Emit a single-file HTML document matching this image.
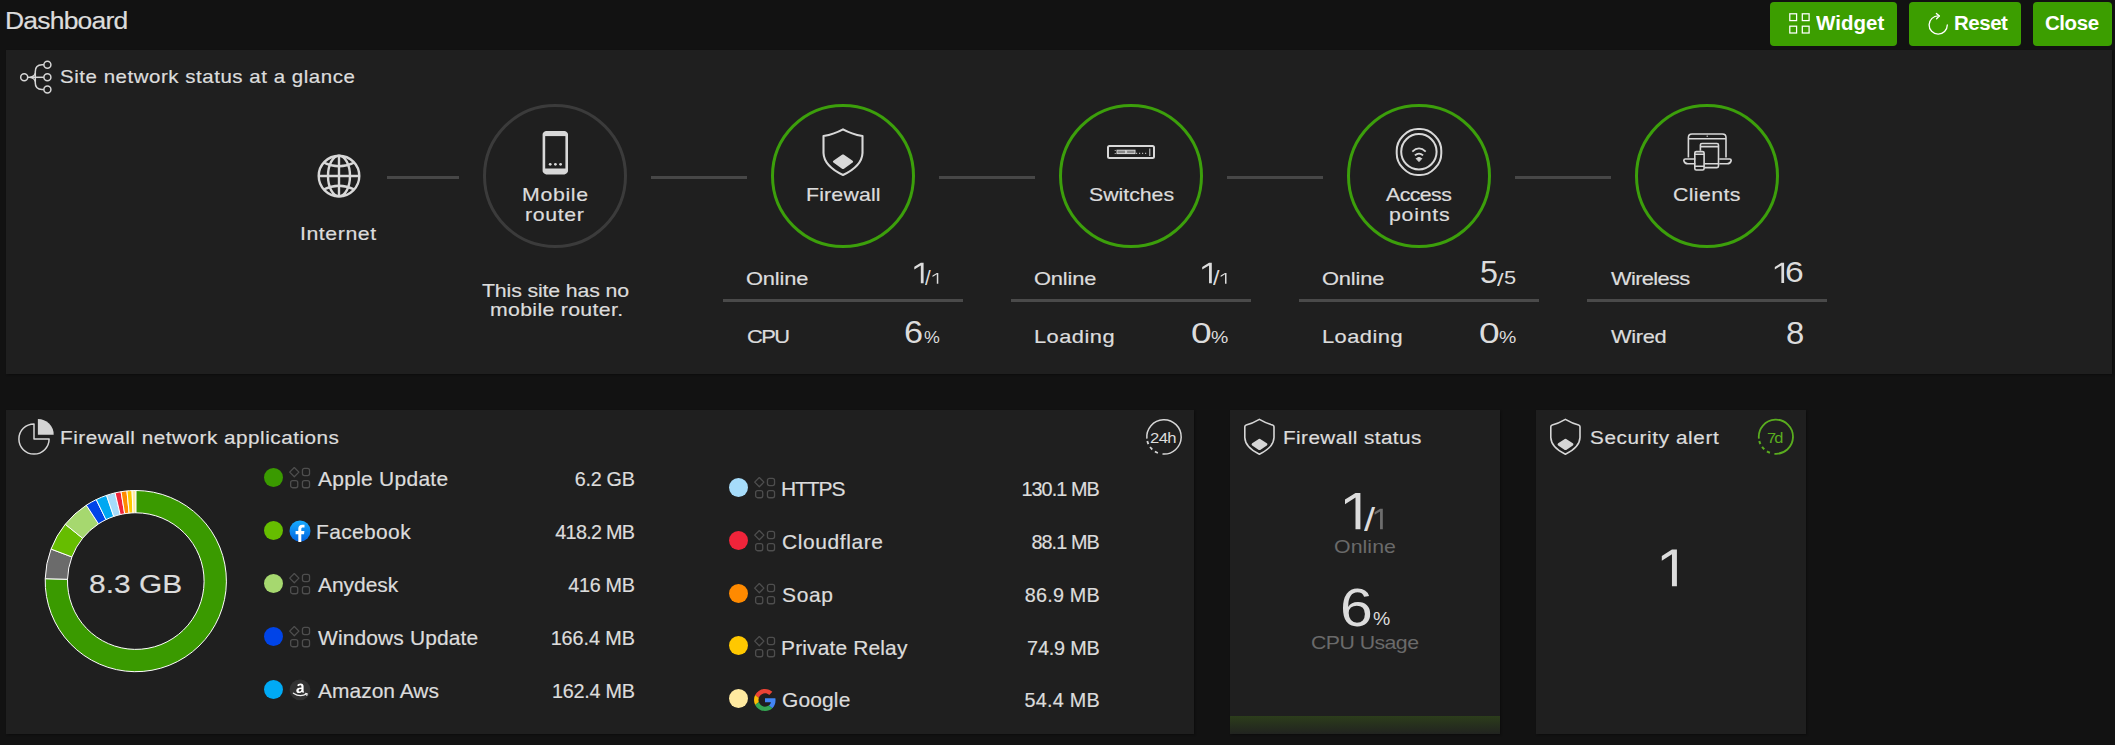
<!DOCTYPE html>
<html><head><meta charset="utf-8"><style>
*{margin:0;padding:0;box-sizing:border-box}
html,body{width:2115px;height:745px;overflow:hidden;background:#121212}
body{position:relative;font-family:"Liberation Sans",sans-serif}
.t{position:absolute;white-space:nowrap;-webkit-text-stroke:0.2px currentColor}
.g{position:absolute;white-space:nowrap}
.a{position:absolute}
.btn{position:absolute;top:2px;height:44px;background:#3c9e00;border-radius:4px}
.panel{position:absolute;background:#1f1f1f;box-shadow:1px 1px 2px rgba(0,0,0,.35)}
.circ{position:absolute;width:144px;height:144px;border:3px solid;border-radius:50%}
.line{position:absolute;height:3px;background:#474747}
.div{position:absolute;height:3px;background:#4a4a4a}
.dot{position:absolute;width:19px;height:19px;border-radius:50%}
</style></head><body>
<div class="t" style="left:5.44px;top:10.43px;font-size:23.00px;line-height:23.00px;color:#dcdcdc;letter-spacing:-0.675px;transform:scaleX(1.1500);transform-origin:0 0;">Dashboard</div>
<div class="btn" style="left:1770px;width:127px"></div>
<div class="t" style="left:1815.97px;top:14.49px;font-size:19.50px;line-height:19.50px;color:#fff;font-weight:bold;letter-spacing:0.032px;transform:scaleX(1.0500);transform-origin:0 0;-webkit-text-stroke:0px currentColor;">Widget</div>
<div class="btn" style="left:1909px;width:112px"></div>
<div class="t" style="left:1954.12px;top:14.49px;font-size:19.50px;line-height:19.50px;color:#fff;font-weight:bold;letter-spacing:-0.450px;transform:scaleX(1.0500);transform-origin:0 0;-webkit-text-stroke:0px currentColor;">Reset</div>
<div class="btn" style="left:2033px;width:79px"></div>
<div class="t" style="left:2045.05px;top:14.49px;font-size:19.50px;line-height:19.50px;color:#fff;font-weight:bold;letter-spacing:-0.411px;transform:scaleX(1.0500);transform-origin:0 0;-webkit-text-stroke:0px currentColor;">Close</div>
<svg class="a" style="left:1784px;top:8px" width="32" height="32" viewBox="1784 8 32 32" fill="none" stroke="#fff" stroke-width="1.25">
<rect x="1789.8" y="13.8" width="6.8" height="6.8"/><rect x="1802.3" y="13.8" width="6.8" height="6.8"/><rect x="1789.8" y="26.2" width="6.8" height="6.8"/><rect x="1802.3" y="26.2" width="6.8" height="6.8"/></svg>
<svg class="a" style="left:1920px;top:8px" width="36" height="32" viewBox="1920 8 36 32" fill="none" stroke="#fff" stroke-width="1.3" stroke-linecap="round" stroke-linejoin="round">
<path d="M1947.3 25 A9.1 9.1 0 1 1 1938.5 15.9 L1939 15.9"/><path d="M1936.4 13.4 L1939.4 16.1 L1936.6 18.7"/></svg>
<div class="panel" style="left:6px;top:50px;width:2106px;height:324px"></div>
<svg class="a" style="left:18px;top:58px" width="36" height="38" viewBox="18 58 36 38" fill="none" stroke="#d6d6d6" stroke-width="1.5">
<circle cx="24.2" cy="77.3" r="3.5"/><circle cx="47.4" cy="64.7" r="3.5"/><circle cx="47.4" cy="77.3" r="3.5"/><circle cx="47.4" cy="89.4" r="3.5"/>
<path d="M27.7 77.3 H43.9"/><path d="M43.9 64.7 H42 Q35.3 64.7 35.3 71.5 V83 Q35.3 89.4 42 89.4 H43.9"/><path d="M30 77.3 Q34.5 76.5 35.3 73 M30 77.3 Q34.5 78.1 35.3 81.6" stroke-width="1.2"/></svg>
<div class="t" style="left:59.50px;top:68.53px;font-size:17.80px;line-height:17.80px;color:#dcdcdc;letter-spacing:0.473px;transform:scaleX(1.1500);transform-origin:0 0;">Site network status at a glance</div>
<div class="circ" style="left:483px;top:104px;border-color:#3b3b3b"></div>
<div class="circ" style="left:771px;top:104px;border-color:#3c9f0b"></div>
<div class="circ" style="left:1059px;top:104px;border-color:#3c9f0b"></div>
<div class="circ" style="left:1347px;top:104px;border-color:#3c9f0b"></div>
<div class="circ" style="left:1635px;top:104px;border-color:#3c9f0b"></div>
<div class="line" style="left:387px;top:176px;width:72px"></div>
<div class="line" style="left:651px;top:176px;width:96px"></div>
<div class="line" style="left:939px;top:176px;width:96px"></div>
<div class="line" style="left:1227px;top:176px;width:96px"></div>
<div class="line" style="left:1515px;top:176px;width:96px"></div>
<svg class="a" style="left:0;top:0" width="2115" height="260" viewBox="0 0 2115 260" fill="none" stroke="#d8d8d8">
<g stroke-width="2.4">
<circle cx="339" cy="176" r="20.3"/>
<path d="M339 155.7 V196.3 M318.7 176 H359.3"/>
<ellipse cx="339" cy="176" rx="11" ry="20.3"/>
<path d="M323.5 162.5 Q339 170 354.5 162.5 M323.5 189.5 Q339 182 354.5 189.5"/>
</g>
<g>
<path d="M546.2 131 H564.4 Q565.6 131 566.4 131.8 L567.4 132.8 Q568 133.6 568 134.6 V170.8 Q568 171.8 567.4 172.6 L566.4 173.6 Q565.6 174.4 564.4 174.4 H546.2 Q545 174.4 544.2 173.6 L543.2 172.6 Q542.6 171.8 542.6 170.8 V134.6 Q542.6 133.6 543.2 132.8 L544.2 131.8 Q545 131 546.2 131 Z" fill="#d8d8d8" stroke="none"/>
<rect x="545.2" y="136.1" width="20.2" height="32.4" fill="#1f1f1f" stroke="none"/>
<circle cx="550.2" cy="164.3" r="1.4" fill="#d8d8d8" stroke="none"/><circle cx="555.4" cy="164.3" r="1.4" fill="#d8d8d8" stroke="none"/><circle cx="560.6" cy="164.3" r="1.4" fill="#d8d8d8" stroke="none"/>
</g>
<g>
<path d="M843 129.3 Q851.5 134 862.5 136 V153 Q862 166 843 175 Q824 166 823.5 153 V136 Q834.5 134 843 129.3 Z" stroke-width="2.1" stroke-linejoin="round"/>
<path d="M834 161.7 L843 155.5 L852 161.7 L843 168 Z" fill="#d8d8d8" stroke="#d8d8d8" stroke-width="2.2" stroke-linejoin="round"/>
</g>
<g>
<rect x="1108" y="146" width="46" height="12" rx="1.5" stroke-width="2"/>
<path d="M1115.2 150.5 v0.01 M1115.2 153.5 v0.01" stroke-width="1.2" stroke-linecap="round"/>
<rect x="1117" y="150.2" width="8.6" height="3.4" fill="#8a8a8a" stroke-width="1"/><rect x="1126.6" y="150.2" width="8.4" height="3.4" fill="#8a8a8a" stroke-width="1"/>
<path d="M1136 153.3 h1.2 M1139 153.3 h1.2 M1142 153.3 h1.2 M1145 153.3 h1.2" stroke-width="1"/>
<path d="M1149.8 148.5 V156" stroke-width="1"/>
</g>
<g stroke-width="2">
<path d="M1441.30 153.15 Q1441.30 161.57 1435.55 167.52 L1433.98 169.15 Q1428.24 175.10 1420.11 175.10 L1417.89 175.10 Q1409.76 175.10 1404.02 169.15 L1402.45 167.52 Q1396.70 161.57 1396.70 153.15 L1396.70 150.85 Q1396.70 142.43 1402.45 136.48 L1404.02 134.85 Q1409.76 128.90 1417.89 128.90 L1420.11 128.90 Q1428.24 128.90 1433.98 134.85 L1435.55 136.48 Q1441.30 142.43 1441.30 150.85 Z"/>
<circle cx="1418.9" cy="151.8" r="17.7"/>
<path d="M1412.3 151.6 Q1419 145.2 1425.7 151.6 M1414.9 155.4 Q1419 151.8 1423.1 155.4" stroke-width="1.8"/>
<path d="M1416.2 158.6 Q1419 156.2 1421.8 158.6 L1419 161.6 Z" fill="#d8d8d8" stroke="#d8d8d8" stroke-width="1" stroke-linejoin="round"/>
</g>
<g stroke-width="1.6">
<path d="M1688.4 157.5 V137.5 Q1688.4 134 1692 134 H1722.4 Q1726 134 1726 137.5 V157.5"/>
<path d="M1688.4 138.8 H1726"/><path d="M1707.2 135.5 V137" stroke-width="1"/>
<path d="M1695.3 159 H1685.3 Q1683.8 159 1683.8 160.5 Q1684.6 163.8 1687.8 163.8 H1695.3 M1719.3 159 H1729.7 Q1731.2 159 1731.2 160.5 Q1730.4 163.8 1727.2 163.8 H1719.3" />
<path d="M1700.4 150.8 V145 Q1700.4 143.5 1701.9 143.5 H1717 Q1718.5 143.5 1718.5 145 V166 Q1718.5 167.6 1717 167.6 H1704.5"/>
<path d="M1700.4 146.6 H1718.5 M1704.5 163.8 H1718.5"/>
<path d="M1696.3 151.6 H1702.6 Q1704.1 151.6 1704.1 153.1 V168.5 Q1704.1 170 1702.6 170 H1696.3 Q1694.8 170 1694.8 168.5 V153.1 Q1694.8 151.6 1696.3 151.6 Z"/>
<path d="M1694.8 154.2 H1704.1 M1694.8 166.3 H1704.1"/>
</g>
</svg>
<div class="t" style="left:300.20px;top:224.94px;font-size:18.50px;line-height:18.50px;color:#dcdcdc;letter-spacing:0.488px;transform:scaleX(1.1500);transform-origin:0 0;">Internet</div>
<div class="t" style="left:522.34px;top:186.14px;font-size:18.50px;line-height:18.50px;color:#dcdcdc;letter-spacing:0.580px;transform:scaleX(1.1500);transform-origin:0 0;">Mobile</div>
<div class="t" style="left:525.48px;top:205.54px;font-size:18.50px;line-height:18.50px;color:#dcdcdc;letter-spacing:0.549px;transform:scaleX(1.1500);transform-origin:0 0;">router</div>
<div class="t" style="left:805.92px;top:186.04px;font-size:18.50px;line-height:18.50px;color:#dcdcdc;letter-spacing:0.162px;transform:scaleX(1.1500);transform-origin:0 0;">Firewall</div>
<div class="t" style="left:1088.64px;top:186.14px;font-size:18.50px;line-height:18.50px;color:#dcdcdc;letter-spacing:-0.013px;transform:scaleX(1.1500);transform-origin:0 0;">Switches</div>
<div class="t" style="left:1386.36px;top:186.14px;font-size:18.50px;line-height:18.50px;color:#dcdcdc;letter-spacing:-0.486px;transform:scaleX(1.1500);transform-origin:0 0;">Access</div>
<div class="t" style="left:1388.50px;top:205.54px;font-size:18.50px;line-height:18.50px;color:#dcdcdc;letter-spacing:0.652px;transform:scaleX(1.1500);transform-origin:0 0;">points</div>
<div class="t" style="left:1672.74px;top:186.14px;font-size:18.50px;line-height:18.50px;color:#dcdcdc;letter-spacing:0.335px;transform:scaleX(1.1500);transform-origin:0 0;">Clients</div>
<div class="t" style="left:481.76px;top:281.64px;font-size:18.50px;line-height:18.50px;color:#dcdcdc;letter-spacing:-0.117px;transform:scaleX(1.1500);transform-origin:0 0;">This site has no</div>
<div class="t" style="left:489.60px;top:300.74px;font-size:18.50px;line-height:18.50px;color:#dcdcdc;letter-spacing:0.277px;transform:scaleX(1.1500);transform-origin:0 0;">mobile router.</div>
<div class="div" style="left:723px;top:299px;width:240px"></div>
<div class="t" style="left:746.42px;top:269.01px;font-size:19.00px;line-height:19.00px;color:#dcdcdc;letter-spacing:-0.151px;transform:scaleX(1.1500);transform-origin:0 0;">Online</div>
<div class="t" style="left:746.78px;top:327.41px;font-size:19.00px;line-height:19.00px;color:#dcdcdc;letter-spacing:-1.370px;transform:scaleX(1.1500);transform-origin:0 0;">CPU</div>
<div class="div" style="left:1011px;top:299px;width:240px"></div>
<div class="t" style="left:1034.42px;top:269.01px;font-size:19.00px;line-height:19.00px;color:#dcdcdc;letter-spacing:-0.151px;transform:scaleX(1.1500);transform-origin:0 0;">Online</div>
<div class="t" style="left:1034.14px;top:327.41px;font-size:19.00px;line-height:19.00px;color:#dcdcdc;letter-spacing:0.406px;transform:scaleX(1.1500);transform-origin:0 0;">Loading</div>
<div class="div" style="left:1299px;top:299px;width:240px"></div>
<div class="t" style="left:1322.42px;top:269.01px;font-size:19.00px;line-height:19.00px;color:#dcdcdc;letter-spacing:-0.151px;transform:scaleX(1.1500);transform-origin:0 0;">Online</div>
<div class="t" style="left:1322.14px;top:327.41px;font-size:19.00px;line-height:19.00px;color:#dcdcdc;letter-spacing:0.406px;transform:scaleX(1.1500);transform-origin:0 0;">Loading</div>
<div class="div" style="left:1587px;top:299px;width:240px"></div>
<div class="t" style="left:1611.46px;top:269.01px;font-size:19.00px;line-height:19.00px;color:#dcdcdc;letter-spacing:-0.566px;transform:scaleX(1.1500);transform-origin:0 0;">Wireless</div>
<div class="t" style="left:1611.46px;top:327.41px;font-size:19.00px;line-height:19.00px;color:#dcdcdc;letter-spacing:-0.280px;transform:scaleX(1.1500);transform-origin:0 0;">Wired</div>
<svg class="a" style="left:0;top:0" width="2115" height="745" viewBox="0 0 2115 745"><path d="M920.82 262.70 L923.60 262.70 L923.60 283.30 L920.82 283.30 L920.82 265.38 L914.30 269.42 L914.30 266.74 Z" fill="#dcdcdc"/></svg>
<div class="g" style="left:924.74px;top:269.28px;font-size:19.31px;line-height:19.31px;color:#dcdcdc;transform:scaleX(1.0611);transform-origin:0 0;">/</div>
<svg class="a" style="left:0;top:0" width="2115" height="745" viewBox="0 0 2115 745"><path d="M936.80 272.90 L938.30 272.90 L938.30 283.70 L936.80 283.70 L936.80 274.30 L932.50 276.97 L932.50 275.57 Z" fill="#dcdcdc"/></svg>
<div class="g" style="left:903.75px;top:317.20px;font-size:31.09px;line-height:31.09px;color:#dcdcdc;transform:scaleX(1.1028);transform-origin:0 0;">6</div>
<div class="g" style="left:923.52px;top:329.24px;font-size:17.25px;line-height:17.25px;color:#dcdcdc;transform:scaleX(1.0325);transform-origin:0 0;">%</div>
<svg class="a" style="left:0;top:0" width="2115" height="745" viewBox="0 0 2115 745"><path d="M1209.02 262.70 L1211.80 262.70 L1211.80 283.30 L1209.02 283.30 L1209.02 265.38 L1202.20 269.61 L1202.20 266.93 Z" fill="#dcdcdc"/></svg>
<div class="g" style="left:1212.78px;top:269.20px;font-size:19.32px;line-height:19.32px;color:#dcdcdc;transform:scaleX(1.2102);transform-origin:0 0;">/</div>
<svg class="a" style="left:0;top:0" width="2115" height="745" viewBox="0 0 2115 745"><path d="M1225.00 272.90 L1226.50 272.90 L1226.50 283.70 L1225.00 283.70 L1225.00 274.30 L1220.70 276.97 L1220.70 275.57 Z" fill="#dcdcdc"/></svg>
<div class="g" style="left:1190.51px;top:318.22px;font-size:30.37px;line-height:30.37px;color:#dcdcdc;transform:scaleX(1.2236);transform-origin:0 0;">0</div>
<div class="g" style="left:1210.56px;top:329.33px;font-size:17.31px;line-height:17.31px;color:#dcdcdc;transform:scaleX(1.1236);transform-origin:0 0;">%</div>
<div class="g" style="left:1479.63px;top:257.69px;font-size:30.84px;line-height:30.84px;color:#dcdcdc;transform:scaleX(1.0476);transform-origin:0 0;">5</div>
<div class="g" style="left:1497.45px;top:269.65px;font-size:19.11px;line-height:19.11px;color:#dcdcdc;transform:scaleX(1.2432);transform-origin:0 0;">/</div>
<div class="g" style="left:1503.66px;top:269.76px;font-size:17.44px;line-height:17.44px;color:#dcdcdc;transform:scaleX(1.2499);transform-origin:0 0;">5</div>
<div class="g" style="left:1478.51px;top:318.22px;font-size:30.37px;line-height:30.37px;color:#dcdcdc;transform:scaleX(1.2236);transform-origin:0 0;">0</div>
<div class="g" style="left:1498.56px;top:329.33px;font-size:17.31px;line-height:17.31px;color:#dcdcdc;transform:scaleX(1.1236);transform-origin:0 0;">%</div>
<svg class="a" style="left:0;top:0" width="2115" height="745" viewBox="0 0 2115 745"><path d="M1781.37 262.80 L1784.10 262.80 L1784.10 283.00 L1781.37 283.00 L1781.37 265.43 L1774.80 269.50 L1774.80 266.88 Z" fill="#dcdcdc"/></svg>
<div class="g" style="left:1784.91px;top:258.31px;font-size:29.19px;line-height:29.19px;color:#dcdcdc;transform:scaleX(1.1522);transform-origin:0 0;">6</div>
<div class="g" style="left:1785.70px;top:317.67px;font-size:31.03px;line-height:31.03px;color:#dcdcdc;transform:scaleX(1.0594);transform-origin:0 0;">8</div>
<div class="panel" style="left:6px;top:410px;width:1188px;height:324px"></div>
<div class="panel" style="left:1230px;top:410px;width:270px;height:324px"></div>
<div class="panel" style="left:1536px;top:410px;width:270px;height:324px"></div>
<div class="a" style="left:1230px;top:716px;width:270px;height:18px;background:linear-gradient(#2c3d1b,#212320)"></div>
<svg class="a" style="left:14px;top:414px" width="44" height="44" viewBox="14 414 44 44" fill="none" stroke="#d6d6d6" stroke-width="1.5" stroke-linejoin="round">
<path d="M34 423.9 A15.1 15.1 0 1 0 49.1 439 H34 Z"/><path d="M37.9 418.9 A15.8 15.8 0 0 1 53.7 434.7 H37.9 Z" fill="#d4d4d4" stroke="none"/></svg>
<div class="t" style="left:59.76px;top:428.66px;font-size:18.00px;line-height:18.00px;color:#dcdcdc;letter-spacing:0.446px;transform:scaleX(1.1500);transform-origin:0 0;">Firewall network applications</div>
<svg class="a" style="left:1140px;top:413px" width="48" height="48" viewBox="1140 413 48 48" fill="none" stroke="#d6d6d6" stroke-width="1.5">
<path d="M1146.89 438.70 A17.2 17.2 0 1 1 1162.50 454.03"/><path d="M1147.31 441.06 A17.2 17.2 0 0 0 1159.84 453.59" stroke-dasharray="3.3 3.3" stroke-width="1.8"/></svg>
<div class="t" style="left:1150.44px;top:431.42px;font-size:14.50px;line-height:14.50px;color:#dcdcdc;letter-spacing:-0.538px;transform:scaleX(1.1500);transform-origin:0 0;-webkit-text-stroke:0px currentColor;">24h</div>
<svg class="a" style="left:0;top:480px" width="260" height="210" viewBox="0 480 260 210" stroke="#ffffff" stroke-width="1" stroke-linejoin="round"><path d="M135.80 490.50 A90.6 90.6 0 1 1 45.23 578.70 L67.52 579.29 A68.3 68.3 0 1 0 135.80 512.80 Z" fill="#3a9a00"/><path d="M45.23 578.70 A90.6 90.6 0 0 1 51.06 549.05 L71.92 556.94 A68.3 68.3 0 0 0 67.52 579.29 Z" fill="#6b6b6b"/><path d="M51.06 549.05 A90.6 90.6 0 0 1 65.25 524.26 L82.61 538.25 A68.3 68.3 0 0 0 71.92 556.94 Z" fill="#66bd00"/><path d="M65.25 524.26 A90.6 90.6 0 0 1 86.32 505.20 L98.50 523.89 A68.3 68.3 0 0 0 82.61 538.25 Z" fill="#a6d86f"/><path d="M86.32 505.20 A90.6 90.6 0 0 1 96.25 499.59 L105.98 519.65 A68.3 68.3 0 0 0 98.50 523.89 Z" fill="#0044e8"/><path d="M96.25 499.59 A90.6 90.6 0 0 1 106.54 495.35 L113.74 516.46 A68.3 68.3 0 0 0 105.98 519.65 Z" fill="#00a8f2"/><path d="M106.54 495.35 A90.6 90.6 0 0 1 115.11 492.89 L120.21 514.60 A68.3 68.3 0 0 0 113.74 516.46 Z" fill="#a6dcfa"/><path d="M115.11 492.89 A90.6 90.6 0 0 1 121.04 491.71 L124.67 513.71 A68.3 68.3 0 0 0 120.21 514.60 Z" fill="#f0243a"/><path d="M121.04 491.71 A90.6 90.6 0 0 1 126.95 490.93 L129.13 513.13 A68.3 68.3 0 0 0 124.67 513.71 Z" fill="#ff8a00"/><path d="M126.95 490.93 A90.6 90.6 0 0 1 132.07 490.58 L132.99 512.86 A68.3 68.3 0 0 0 129.13 513.13 Z" fill="#ffc800"/><path d="M132.07 490.58 A90.6 90.6 0 0 1 135.80 490.50 L135.80 512.80 A68.3 68.3 0 0 0 132.99 512.86 Z" fill="#ffeaa0"/></svg>
<div class="t" style="left:88.66px;top:571.09px;font-size:26.00px;line-height:26.00px;color:#dcdcdc;letter-spacing:0.014px;transform:scaleX(1.1500);transform-origin:0 0;">8.3 GB</div>
<div class="dot" style="left:263.5px;top:467.9px;background:#3a9a00"></div>
<svg class="a" style="left:289px;top:467.2px" width="22" height="24" viewBox="0 0 22 24" fill="none" stroke="#4e4e4e" stroke-width="1.3">
<path d="M5.3 0.5 L9.9 5.1 L5.3 9.7 L0.7 5.1 Z" stroke-linejoin="round"/><rect x="13.45" y="1.45" width="7.1" height="7.1" rx="2"/><rect x="1.65" y="13.65" width="7.1" height="7.1" rx="2"/><rect x="13.45" y="13.65" width="7.1" height="7.1" rx="2"/></svg>
<div class="t" style="left:318.45px;top:470.04px;font-size:19.80px;line-height:19.80px;color:#dcdcdc;letter-spacing:0.258px;transform:scaleX(1.0600);transform-origin:0 0;">Apple Update</div>
<div class="t" style="left:574.86px;top:470.04px;font-size:19.80px;line-height:19.80px;color:#dcdcdc;letter-spacing:-0.314px;">6.2 GB</div>
<div class="dot" style="left:263.5px;top:520.9px;background:#66bd00"></div>
<svg class="a" style="left:289px;top:520.2px" width="22" height="22" viewBox="0 0 22 22"><defs><linearGradient id="fbg" x1="0" y1="0" x2="0" y2="1"><stop offset="0" stop-color="#18acfe"/><stop offset="1" stop-color="#0163e0"/></linearGradient></defs>
<circle cx="11" cy="11" r="10.5" fill="url(#fbg)"/><path d="M12.3 22 V14.2 H15 L15.4 11 H12.3 V9.1 C12.3 8.2 12.6 7.6 13.9 7.6 H15.5 V4.8 C15.2 4.8 14.3 4.7 13.3 4.7 C11 4.7 9.3 6.1 9.3 8.7 V11 H6.6 V14.2 H9.3 V22 Z" fill="#fff"/></svg>
<div class="t" style="left:316.41px;top:523.04px;font-size:19.80px;line-height:19.80px;color:#dcdcdc;letter-spacing:0.342px;transform:scaleX(1.0600);transform-origin:0 0;">Facebook</div>
<div class="t" style="left:555.37px;top:523.04px;font-size:19.80px;line-height:19.80px;color:#dcdcdc;letter-spacing:-0.739px;">418.2 MB</div>
<div class="dot" style="left:263.5px;top:573.9px;background:#a6d86f"></div>
<svg class="a" style="left:289px;top:573.2px" width="22" height="24" viewBox="0 0 22 24" fill="none" stroke="#4e4e4e" stroke-width="1.3">
<path d="M5.3 0.5 L9.9 5.1 L5.3 9.7 L0.7 5.1 Z" stroke-linejoin="round"/><rect x="13.45" y="1.45" width="7.1" height="7.1" rx="2"/><rect x="1.65" y="13.65" width="7.1" height="7.1" rx="2"/><rect x="13.45" y="13.65" width="7.1" height="7.1" rx="2"/></svg>
<div class="t" style="left:318.45px;top:576.04px;font-size:19.80px;line-height:19.80px;color:#dcdcdc;letter-spacing:-0.021px;transform:scaleX(1.0600);transform-origin:0 0;">Anydesk</div>
<div class="t" style="left:568.31px;top:576.04px;font-size:19.80px;line-height:19.80px;color:#dcdcdc;letter-spacing:-0.322px;">416 MB</div>
<div class="dot" style="left:263.5px;top:626.9px;background:#0044e8"></div>
<svg class="a" style="left:289px;top:626.2px" width="22" height="24" viewBox="0 0 22 24" fill="none" stroke="#4e4e4e" stroke-width="1.3">
<path d="M5.3 0.5 L9.9 5.1 L5.3 9.7 L0.7 5.1 Z" stroke-linejoin="round"/><rect x="13.45" y="1.45" width="7.1" height="7.1" rx="2"/><rect x="1.65" y="13.65" width="7.1" height="7.1" rx="2"/><rect x="13.45" y="13.65" width="7.1" height="7.1" rx="2"/></svg>
<div class="t" style="left:318.27px;top:629.04px;font-size:19.80px;line-height:19.80px;color:#dcdcdc;letter-spacing:0.125px;transform:scaleX(1.0600);transform-origin:0 0;">Windows Update</div>
<div class="t" style="left:550.68px;top:629.04px;font-size:19.80px;line-height:19.80px;color:#dcdcdc;letter-spacing:-0.070px;">166.4 MB</div>
<div class="dot" style="left:263.5px;top:679.9px;background:#00aaf5"></div>
<svg class="a" style="left:289px;top:679.2px" width="22" height="22" viewBox="0 0 22 22"><circle cx="11" cy="10.9" r="10.4" fill="#323232"/>
<path d="M8 6.3 Q9 4.4 11.6 4.4 Q14.6 4.4 14.6 7.4 V11.6 Q14.6 12.6 15.2 13.1 L14 14 Q13.4 13.5 13.1 12.8 Q12 14.1 10.1 14.1 Q7.3 14.1 7.3 11.5 Q7.3 8.6 12.4 8.6 V7.6 Q12.4 6.2 11.3 6.2 Q10.2 6.2 9.8 7.2 Z M12.4 10.1 Q9.6 10.1 9.6 11.5 Q9.6 12.5 10.6 12.5 Q12.4 12.5 12.4 10.7 Z" fill="#fff"/>
<path d="M4.4 14.2 Q11 18.6 17.6 14.9" stroke="#eee" stroke-width="1.3" fill="none" stroke-linecap="round"/><path d="M16.2 14.3 L18.3 14.6 L17.8 16.6" stroke="#eee" stroke-width="1" fill="none" stroke-linecap="round"/></svg>
<div class="t" style="left:318.45px;top:682.04px;font-size:19.80px;line-height:19.80px;color:#dcdcdc;letter-spacing:0.008px;transform:scaleX(1.0600);transform-origin:0 0;">Amazon Aws</div>
<div class="t" style="left:551.89px;top:682.04px;font-size:19.80px;line-height:19.80px;color:#dcdcdc;letter-spacing:-0.243px;">162.4 MB</div>
<div class="dot" style="left:728.5px;top:477.7px;background:#a6dcfa"></div>
<svg class="a" style="left:754px;top:477.0px" width="22" height="24" viewBox="0 0 22 24" fill="none" stroke="#4e4e4e" stroke-width="1.3">
<path d="M5.3 0.5 L9.9 5.1 L5.3 9.7 L0.7 5.1 Z" stroke-linejoin="round"/><rect x="13.45" y="1.45" width="7.1" height="7.1" rx="2"/><rect x="1.65" y="13.65" width="7.1" height="7.1" rx="2"/><rect x="13.45" y="13.65" width="7.1" height="7.1" rx="2"/></svg>
<div class="t" style="left:781.41px;top:479.84px;font-size:19.80px;line-height:19.80px;color:#dcdcdc;letter-spacing:-1.011px;transform:scaleX(1.0600);transform-origin:0 0;">HTTPS</div>
<div class="t" style="left:1021.39px;top:479.84px;font-size:19.80px;line-height:19.80px;color:#dcdcdc;letter-spacing:-0.907px;">130.1 MB</div>
<div class="dot" style="left:728.5px;top:530.6px;background:#f0243a"></div>
<svg class="a" style="left:754px;top:529.9px" width="22" height="24" viewBox="0 0 22 24" fill="none" stroke="#4e4e4e" stroke-width="1.3">
<path d="M5.3 0.5 L9.9 5.1 L5.3 9.7 L0.7 5.1 Z" stroke-linejoin="round"/><rect x="13.45" y="1.45" width="7.1" height="7.1" rx="2"/><rect x="1.65" y="13.65" width="7.1" height="7.1" rx="2"/><rect x="13.45" y="13.65" width="7.1" height="7.1" rx="2"/></svg>
<div class="t" style="left:782.43px;top:532.74px;font-size:19.80px;line-height:19.80px;color:#dcdcdc;letter-spacing:0.565px;transform:scaleX(1.0600);transform-origin:0 0;">Cloudflare</div>
<div class="t" style="left:1031.42px;top:532.74px;font-size:19.80px;line-height:19.80px;color:#dcdcdc;letter-spacing:-0.897px;">88.1 MB</div>
<div class="dot" style="left:728.5px;top:583.5px;background:#ff8a00"></div>
<svg class="a" style="left:754px;top:582.8px" width="22" height="24" viewBox="0 0 22 24" fill="none" stroke="#4e4e4e" stroke-width="1.3">
<path d="M5.3 0.5 L9.9 5.1 L5.3 9.7 L0.7 5.1 Z" stroke-linejoin="round"/><rect x="13.45" y="1.45" width="7.1" height="7.1" rx="2"/><rect x="1.65" y="13.65" width="7.1" height="7.1" rx="2"/><rect x="13.45" y="13.65" width="7.1" height="7.1" rx="2"/></svg>
<div class="t" style="left:782.32px;top:585.64px;font-size:19.80px;line-height:19.80px;color:#dcdcdc;letter-spacing:0.631px;transform:scaleX(1.0600);transform-origin:0 0;">Soap</div>
<div class="t" style="left:1024.87px;top:585.64px;font-size:19.80px;line-height:19.80px;color:#dcdcdc;letter-spacing:0.195px;">86.9 MB</div>
<div class="dot" style="left:728.5px;top:636.4px;background:#ffc800"></div>
<svg class="a" style="left:754px;top:635.7px" width="22" height="24" viewBox="0 0 22 24" fill="none" stroke="#4e4e4e" stroke-width="1.3">
<path d="M5.3 0.5 L9.9 5.1 L5.3 9.7 L0.7 5.1 Z" stroke-linejoin="round"/><rect x="13.45" y="1.45" width="7.1" height="7.1" rx="2"/><rect x="1.65" y="13.65" width="7.1" height="7.1" rx="2"/><rect x="13.45" y="13.65" width="7.1" height="7.1" rx="2"/></svg>
<div class="t" style="left:781.41px;top:638.54px;font-size:19.80px;line-height:19.80px;color:#dcdcdc;letter-spacing:0.132px;transform:scaleX(1.0600);transform-origin:0 0;">Private Relay</div>
<div class="t" style="left:1027.08px;top:638.54px;font-size:19.80px;line-height:19.80px;color:#dcdcdc;letter-spacing:-0.174px;">74.9 MB</div>
<div class="dot" style="left:728.5px;top:689.3px;background:#ffeaa0"></div>
<svg class="a" style="left:754px;top:688.6px" width="22" height="22" viewBox="0 0 48 48">
<path fill="#EA4335" d="M24 9.5c3.54 0 6.71 1.22 9.21 3.6l6.85-6.85C35.9 2.38 30.47 0 24 0 14.62 0 6.51 5.38 2.56 13.22l7.98 6.19C12.43 13.72 17.74 9.5 24 9.5z"/>
<path fill="#4285F4" d="M46.98 24.55c0-1.57-.15-3.09-.38-4.55H24v9.02h12.94c-.58 2.96-2.26 5.48-4.78 7.18l7.73 6c4.51-4.18 7.09-10.36 7.09-17.65z"/>
<path fill="#FBBC05" d="M10.53 28.59c-.48-1.45-.76-2.99-.76-4.59s.27-3.14.76-4.59l-7.98-6.19C.92 16.46 0 20.12 0 24c0 3.88.92 7.54 2.56 10.78l7.97-6.19z"/>
<path fill="#34A853" d="M24 48c6.48 0 11.93-2.13 15.89-5.81l-7.73-6c-2.15 1.45-4.92 2.3-8.16 2.3-6.26 0-11.57-4.22-13.47-9.91l-7.98 6.19C6.51 42.62 14.62 48 24 48z"/></svg>
<div class="t" style="left:782.43px;top:691.44px;font-size:19.80px;line-height:19.80px;color:#dcdcdc;letter-spacing:0.130px;transform:scaleX(1.0600);transform-origin:0 0;">Google</div>
<div class="t" style="left:1024.59px;top:691.44px;font-size:19.80px;line-height:19.80px;color:#dcdcdc;letter-spacing:0.241px;">54.4 MB</div>
<svg class="a" style="left:1243.1px;top:418px" width="33" height="38" viewBox="0 0 33 38" fill="none" stroke="#d6d6d6" stroke-width="1.6" stroke-linejoin="round">
<path d="M16.4 1.4 Q23.5 5.6 29.6 7 Q31 7.4 31 8.8 V19.5 Q30.6 29.5 16.4 36.2 Q2.2 29.5 1.8 19.5 V8.8 Q1.8 7.4 3.2 7 Q9.3 5.6 16.4 1.4 Z"/><path d="M9.9 26.4 L16.5 22 L23.1 26.4 L16.5 30.8 Z" fill="#d6d6d6" stroke-width="2.6"/></svg>
<div class="t" style="left:1283.00px;top:428.66px;font-size:18.00px;line-height:18.00px;color:#dcdcdc;letter-spacing:0.373px;transform:scaleX(1.1500);transform-origin:0 0;">Firewall status</div>
<svg class="a" style="left:0;top:0" width="2115" height="745" viewBox="0 0 2115 745"><path d="M1355.50 492.90 L1360.40 492.90 L1360.40 529.20 L1355.50 529.20 L1355.50 497.62 L1345.00 504.13 L1345.00 499.41 Z" fill="#dcdcdc"/></svg>
<div class="g" style="left:1363.52px;top:503.04px;font-size:33.08px;line-height:33.08px;color:#dcdcdc;transform:scaleX(1.2075);transform-origin:0 0;">/</div>
<svg class="a" style="left:0;top:0" width="2115" height="745" viewBox="0 0 2115 745"><path d="M1380.05 508.80 L1382.80 508.80 L1382.80 529.20 L1380.05 529.20 L1380.05 511.45 L1374.60 514.83 L1374.60 512.18 Z" fill="#6e6e6e"/></svg>
<div class="t" style="left:1334.48px;top:538.14px;font-size:18.50px;line-height:18.50px;color:#6a6a6a;letter-spacing:0.075px;transform:scaleX(1.1500);transform-origin:0 0;-webkit-text-stroke:0px currentColor;">Online</div>
<div class="g" style="left:1340.06px;top:580.82px;font-size:53.94px;line-height:53.94px;color:#dcdcdc;transform:scaleX(1.0924);transform-origin:0 0;">6</div>
<div class="g" style="left:1372.56px;top:609.07px;font-size:19.22px;line-height:19.22px;color:#dcdcdc;transform:scaleX(1.0128);transform-origin:0 0;">%</div>
<div class="t" style="left:1311.04px;top:634.24px;font-size:18.50px;line-height:18.50px;color:#6a6a6a;letter-spacing:-0.472px;transform:scaleX(1.1500);transform-origin:0 0;-webkit-text-stroke:0px currentColor;">CPU Usage</div>
<svg class="a" style="left:1549.1px;top:418.3px" width="33" height="38" viewBox="0 0 33 38" fill="none" stroke="#d6d6d6" stroke-width="1.6" stroke-linejoin="round">
<path d="M16.4 1.4 Q23.5 5.6 29.6 7 Q31 7.4 31 8.8 V19.5 Q30.6 29.5 16.4 36.2 Q2.2 29.5 1.8 19.5 V8.8 Q1.8 7.4 3.2 7 Q9.3 5.6 16.4 1.4 Z"/><path d="M9.9 26.4 L16.5 22 L23.1 26.4 L16.5 30.8 Z" fill="#d6d6d6" stroke-width="2.6"/></svg>
<div class="t" style="left:1590.04px;top:428.56px;font-size:18.00px;line-height:18.00px;color:#dcdcdc;letter-spacing:0.524px;transform:scaleX(1.1500);transform-origin:0 0;">Security alert</div>
<svg class="a" style="left:1752px;top:413px" width="48" height="48" viewBox="1752 413 48 48" fill="none" stroke="#5aad1f" stroke-width="1.8">
<path d="M1758.89 438.54 A17.1 17.1 0 1 1 1774.41 453.78"/><path d="M1759.31 440.89 A17.1 17.1 0 0 0 1771.76 453.34" stroke-dasharray="3.3 3.3" stroke-width="2"/></svg>
<div class="t" style="left:1767.16px;top:430.69px;font-size:14.30px;line-height:14.30px;color:#5aad1f;letter-spacing:-1.677px;transform:scaleX(1.1500);transform-origin:0 0;-webkit-text-stroke:0px currentColor;">7d</div>
<svg class="a" style="left:0;top:0" width="2115" height="745" viewBox="0 0 2115 745"><path d="M1671.96 549.60 L1676.90 549.60 L1676.90 586.20 L1671.96 586.20 L1671.96 554.36 L1661.80 560.66 L1661.80 555.90 Z" fill="#dcdcdc"/></svg>
</body></html>
